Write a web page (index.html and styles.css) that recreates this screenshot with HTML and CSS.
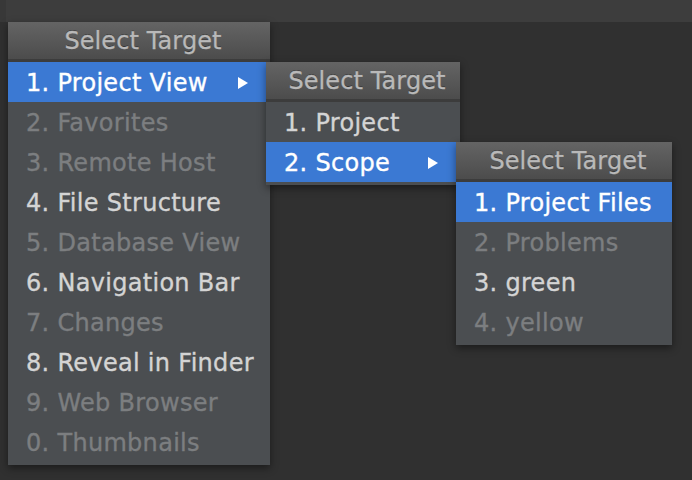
FILE: index.html
```html
<!DOCTYPE html>
<html>
<head>
<meta charset="utf-8">
<link rel="stylesheet" href="styles.css">
</head>
<body>
<div class="topbar"></div>
<div class="stage">
  <div class="menu menu-1">
    <div class="menu-head">Select Target</div>
    <div class="item selected sub"><span>1. Project View</span><svg class="arrow" width="10" height="12" viewBox="0 0 10 12"><polygon points="0,0 10,6 0,12" fill="#ffffff"/></svg></div>
    <div class="item disabled">2. Favorites</div>
    <div class="item disabled">3. Remote Host</div>
    <div class="item">4. File Structure</div>
    <div class="item disabled">5. Database View</div>
    <div class="item">6. Navigation Bar</div>
    <div class="item disabled">7. Changes</div>
    <div class="item">8. Reveal in Finder</div>
    <div class="item disabled">9. Web Browser</div>
    <div class="item disabled">0. Thumbnails</div>
  </div>
  <div class="menu menu-2">
    <div class="menu-head">Select Target</div>
    <div class="item">1. Project</div>
    <div class="item selected sub"><span>2. Scope</span><svg class="arrow" width="10" height="12" viewBox="0 0 10 12"><polygon points="0,0 10,6 0,12" fill="#ffffff"/></svg></div>
  </div>
  <div class="menu menu-3">
    <div class="menu-head">Select Target</div>
    <div class="item selected">1. Project Files</div>
    <div class="item disabled">2. Problems</div>
    <div class="item">3. green</div>
    <div class="item disabled">4. yellow</div>
  </div>
</div>
</body>
</html>
```
FILE: styles.css
```css
html, body {
  margin: 0;
  padding: 0;
}
body {
  background: #303030;
  width: 692px;
  height: 480px;
  overflow: hidden;
  font-family: "DejaVu Sans", "Liberation Sans", sans-serif;
  font-size: 24px;
}
.topbar {
  height: 22px;
  background: #3d3d3d;
  border-left: 6px solid #383838;
}
.stage {
  position: relative;
}
.menu {
  position: absolute;
  background: #4b4e51;
  padding-bottom: 3px;
  box-shadow: 0 3px 8px rgba(0, 0, 0, 0.45);
}
.menu-1 { left: 8px; top: 0; width: 262px; }
.menu-2 { left: 266px; top: 40px; width: 194px; }
.menu-3 { left: 456px; top: 120px; width: 216px; }
.menu-head {
  box-sizing: border-box;
  height: 36px;
  line-height: 36px;
  padding-top: 1px;
  text-align: center;
  padding-left: 8px;
  color: #b9b9b9;
  background: linear-gradient(#646464, #4c4c4c);
  border-bottom: 3px solid #3c3c3c;
  text-shadow: 0 -1px 0 rgba(0, 0, 0, 0.35);
  -webkit-text-stroke: 0.3px #b9b9b9;
  letter-spacing: 0.1px;
  box-sizing: content-box;
}
.item {
  height: 38px;
  padding-top: 2px;
  line-height: 38px;
  padding-left: 18px;
  color: #d4d4d4;
  white-space: nowrap;
  letter-spacing: 0.3px;
  -webkit-text-stroke: 0.35px currentColor;
}
.item.disabled {
  color: #7c7e80;
}
.item.selected {
  background: #3b79d3;
  color: #ffffff;
}
.item.sub {
  display: flex;
  align-items: center;
  justify-content: space-between;
  padding-right: 22px;
}
.arrow {
  display: block;
}
```
